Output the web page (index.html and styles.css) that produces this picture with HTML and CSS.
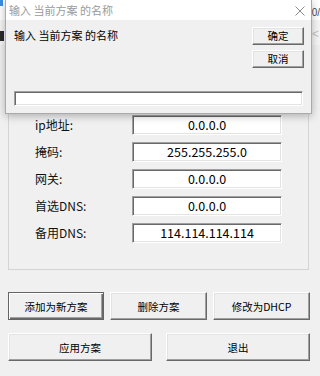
FILE: index.html
```html
<!DOCTYPE html>
<html>
<head>
<meta charset="utf-8">
<link rel="stylesheet" href="styles.css">
</head>
<body>
<div class="screen">
  <div class="topbar"><span class="blue"></span><span class="frag">0/</span></div>
  <div class="toolbar"><span class="tbicon"></span><span class="chev">&lt;</span></div>
  <div class="group">
    <div class="row"><span class="lbl">ip地址:</span><span class="field">0.0.0.0</span></div>
    <div class="row"><span class="lbl">掩码:</span><span class="field">255.255.255.0</span></div>
    <div class="row"><span class="lbl">网关:</span><span class="field">0.0.0.0</span></div>
    <div class="row"><span class="lbl">首选DNS:</span><span class="field">0.0.0.0</span></div>
    <div class="row"><span class="lbl">备用DNS:</span><span class="field">114.114.114.114</span></div>
  </div>
  <div class="btnrow three">
    <button class="btn default">添加为新方案</button>
    <button class="btn">删除方案</button>
    <button class="btn">修改为DHCP</button>
  </div>
  <div class="btnrow two">
    <button class="btn">应用方案</button>
    <button class="btn">退出</button>
  </div>

  <div class="dialog">
    <div class="titlebar">
      <span class="title">输入 当前方案 的名称</span>
      <svg class="close" width="10" height="10" viewBox="0 0 10 10"><path d="M0.5 0.5 L9.5 9.5 M9.5 0.5 L0.5 9.5" stroke="#8a8a8a" stroke-width="1" fill="none"/></svg>
    </div>
    <div class="dbody">
      <div class="dtop">
        <span class="prompt">输入 当前方案 的名称</span>
        <div class="dbtns">
          <button class="btn small">确定</button>
          <button class="btn small">取消</button>
        </div>
      </div>
      <div class="input"></div>
    </div>
  </div>
</div>
</body>
</html>
```
FILE: styles.css
```css
html, body {
  margin: 0;
  padding: 0;
  background: #f0f0f0;
}
.screen {
  position: relative;
  width: 320px;
  height: 376px;
  overflow: hidden;
  background: #f0f0f0;
  font-family: "Noto Sans CJK SC", "Noto Sans", sans-serif;
  color: #000;
  display: flex;
  flex-direction: column;
}
.topbar {
  height: 20px;
  background: #fff;
  display: flex;
  justify-content: space-between;
  align-items: flex-start;
}
.blue {
  width: 3px;
  height: 6px;
  background: #3a8ee6;
}
.frag {
  font-family: "Liberation Sans", sans-serif;
  font-size: 10px;
  line-height: 12px;
  margin-top: 7px;
  margin-right: 0;
  color: #3c4a5a;
}
.toolbar {
  height: 25px;
  display: flex;
  justify-content: space-between;
  align-items: center;
  background: #f5f5f5;
}
.tbicon {
  width: 4px;
  height: 10px;
  background: #2a2a2a;
  margin-top: 6px;
}
.chev {
  font-family: "Liberation Sans", sans-serif;
  font-size: 12px;
  color: #c4c4c4;
  margin-right: 1px;
  margin-top: 2px;
}
.group {
  margin: 55px 0 0 8px;
  width: 301px;
  box-sizing: border-box;
  border: 1px solid #d4d4d4;
  padding: 14px 0 26px 26px;
  display: flex;
  flex-direction: column;
  gap: 7px;
}
.row {
  display: flex;
  align-items: center;
  height: 20px;
}
.lbl {
  width: 97px;
  font-size: 12px;
  line-height: 14px;
  color: #111;
}
.field {
  width: 150px;
  height: 20px;
  box-sizing: border-box;
  background: #fff;
  border-top: 1px solid #a0a0a0;
  border-left: 1px solid #a0a0a0;
  border-right: 1px solid #fff;
  border-bottom: 1px solid #fff;
  box-shadow: inset 1px 1px 0 #696969, inset -1px -1px 0 #e3e3e3;
  text-align: center;
  font-size: 12.5px;
  line-height: 18px;
  color: #000;
}
.btnrow {
  display: flex;
  margin-left: 8px;
}
.three {
  margin-top: 22px;
  gap: 6px;
}
.three .btn:first-child { width: 96px; }
.three .btn { width: 97px; }
.two {
  margin-top: 13px;
  gap: 14px;
}
.two .btn { width: 144px; }
.btn {
  height: 28px;
  box-sizing: border-box;
  background: #f0f0f0;
  border-top: 1px solid #fff;
  border-left: 1px solid #fff;
  border-right: 1px solid #696969;
  border-bottom: 1px solid #696969;
  box-shadow: inset -1px -1px 0 #a0a0a0, inset 1px 1px 0 #e3e3e3;
  font-family: "Noto Sans CJK SC", sans-serif;
  font-size: 10.5px;
  color: #000;
  padding: 0;
  margin: 0;
}
.btn.default {
  border: 1px solid #646464;
  box-shadow: inset 1px 1px 0 #fff, inset -1px -1px 0 #696969, inset -2px -2px 0 #a0a0a0;
}
.dialog {
  position: absolute;
  left: 5px;
  top: 0;
  width: 307px;
  height: 114px;
  box-sizing: border-box;
  border: 1px solid #aaaaaa;
  border-top: none;
  background: #f0f0f0;
  box-shadow: 0 2px 8px rgba(0, 0, 0, 0.28);
  display: flex;
  flex-direction: column;
}
.titlebar {
  height: 20px;
  background: #fff;
  display: flex;
  align-items: center;
  justify-content: space-between;
  padding: 0 6px 0 3px;
}
.title {
  font-size: 11px;
  color: #9a9a9a;
  line-height: 14px;
}
.close {
  display: block;
  margin-top: 1px;
}
.dbody {
  padding: 7px 7px 7px 8px;
  display: flex;
  flex-direction: column;
}
.dtop {
  display: flex;
  justify-content: space-between;
  align-items: flex-start;
}
.prompt {
  font-size: 11px;
  line-height: 14px;
  margin-top: 1px;
  color: #000;
}
.dbtns {
  display: flex;
  flex-direction: column;
  gap: 5px;
}
.btn.small {
  width: 52px;
  height: 18px;
  font-size: 10.5px;
  line-height: 14px;
}
.input {
  margin-top: 23px;
  width: 289px;
  height: 15px;
  box-sizing: border-box;
  background: #fff;
  border-top: 1px solid #a0a0a0;
  border-left: 1px solid #a0a0a0;
  border-right: 1px solid #fff;
  border-bottom: 1px solid #fff;
  box-shadow: inset 1px 1px 0 #696969, inset -1px -1px 0 #e3e3e3;
}
```
